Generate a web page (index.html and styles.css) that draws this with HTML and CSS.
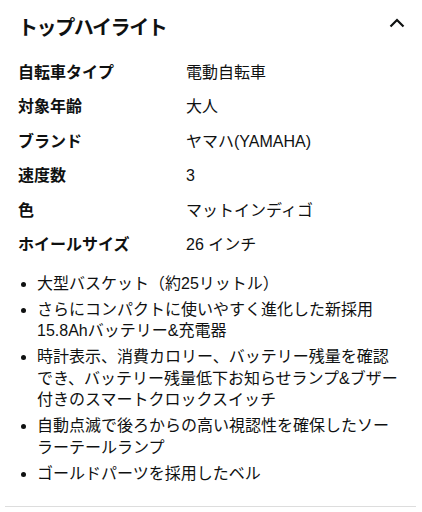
FILE: index.html
```html
<!DOCTYPE html>
<html lang="ja">
<head>
<meta charset="utf-8">
<link rel="stylesheet" href="styles.css">
</head>
<body>
<section class="panel">
  <div class="header">
    <h2 class="title">トップハイライト</h2>
    <svg class="chevron" width="16" height="10" viewBox="0 0 16 10"><path d="M1.5 8.5 L8 2 L14.5 8.5" fill="none" stroke="#0f1111" stroke-width="2.2"/></svg>
  </div>
  <div class="specs">
    <div class="label">自転車タイプ</div><div class="value">電動自転車</div>
    <div class="label">対象年齢</div><div class="value">大人</div>
    <div class="label">ブランド</div><div class="value">ヤマハ(YAMAHA)</div>
    <div class="label">速度数</div><div class="value">3</div>
    <div class="label">色</div><div class="value">マットインディゴ</div>
    <div class="label">ホイールサイズ</div><div class="value">26 インチ</div>
  </div>
  <ul class="bullets">
    <li>大型バスケット（約25リットル）</li>
    <li>さらにコンパクトに使いやすく進化した新採用15.8Ahバッテリー&amp;充電器</li>
    <li>時計表示、消費カロリー、バッテリー残量を確認でき、バッテリー残量低下お知らせランプ&amp;ブザー付きのスマートクロックスイッチ</li>
    <li>自動点滅で後ろからの高い視認性を確保したソーラーテールランプ</li>
    <li>ゴールドパーツを採用したベル</li>
  </ul>
  <div class="divider"></div>
</section>
</body>
</html>
```
FILE: styles.css
```css
html, body {
  margin: 0;
  padding: 0;
  background: #ffffff;
}
body {
  font-family: "Liberation Sans", "Noto Sans CJK JP", sans-serif;
  color: #0f1111;
  width: 422px;
}
.panel {
  padding-top: 14px;
}
.header {
  display: flex;
  align-items: center;
  justify-content: space-between;
  padding: 0 17px 0 18px;
  height: 28px;
}
.title {
  margin: 0;
  font-size: 20px;
  font-weight: 700;
  line-height: 28px;
  letter-spacing: -1.4px;
}
.chevron {
  display: block;
  margin-top: -10px;
}
.specs {
  display: grid;
  grid-template-columns: 168px 1fr;
  row-gap: 14.4px;
  margin: 21px 19px 0 18px;
  font-size: 16px;
  line-height: 20px;
}
.label {
  font-weight: 700;
}
.value {
  font-weight: 400;
}
.bullets {
  margin: 18px 19px 0 18px;
  padding: 0 0 0 19px;
  font-size: 16px;
  line-height: 21.5px;
}
.bullets li {
  margin-bottom: 4.5px;
}
.bullets li:last-child {
  margin-bottom: 0;
}
.divider {
  margin: 22px 6px 0 5px;
  height: 1px;
  background: #dddddd;
}
```
